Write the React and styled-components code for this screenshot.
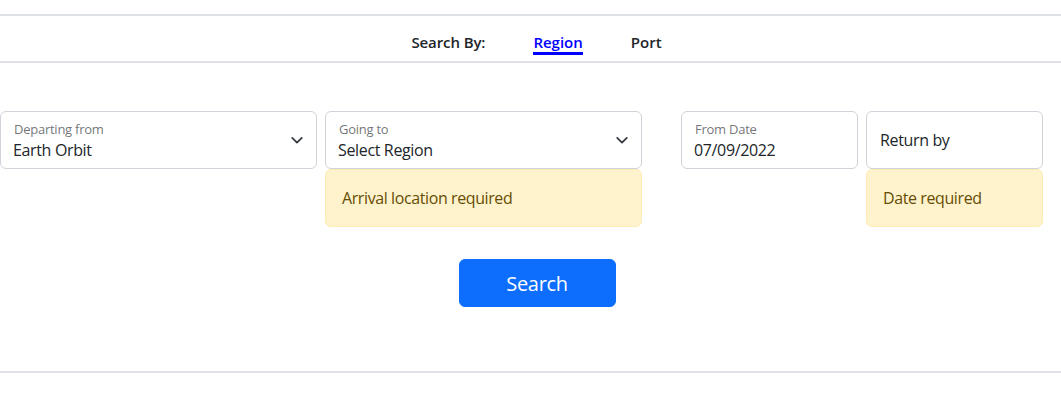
import React from "react";
import styled, { createGlobalStyle } from "styled-components";

const Global = createGlobalStyle`
  html, body { margin: 0; padding: 0; background: #fff; }
  body {
    font-family: "Segoe UI", "Open Sans", "Noto Sans", sans-serif;
    color: #212529;
    font-size: 16px;
  }
`;

const Page = styled.div`
  padding-top: 14px;
`;

const SearchByBar = styled.nav`
  border-top: 2px solid #dee2e6;
  border-bottom: 2px solid #dee2e6;
  height: 45px;
  box-sizing: content-box;
  display: flex;
  align-items: center;
  justify-content: center;
  padding-left: 12px;
  gap: 48px;
`;

const BarLabel = styled.span`
  font-weight: 600;
  font-size: 15px;
  color: #212529;
  padding-top: 6px;
  letter-spacing: -0.1px;
`;

const Tab = styled.a`
  font-weight: 600;
  font-size: 15px;
  text-decoration: none;
  color: ${(p) => (p.$active ? "#0000ff" : "#212529")};
  border-bottom: 3px solid ${(p) => (p.$active ? "#0000ff" : "transparent")};
  line-height: 20px;
  padding-top: 9px;
  cursor: pointer;
`;

const FormSection = styled.section`
  padding: 48px 0 64px;
  border-bottom: 2px solid #dee2e6;
`;

const FieldsRow = styled.div`
  display: flex;
  align-items: flex-start;
  gap: 39px;
`;

const Group = styled.div`
  display: flex;
  gap: 8px;
`;

const Column = styled.div`
  width: ${(p) => p.$w}px;
  display: flex;
  flex-direction: column;
`;

const Floating = styled.div`
  position: relative;
  height: 58px;
  box-sizing: border-box;
  border: 1px solid #ced4da;
  border-radius: 6px;
  background: #fff;
  padding: 0 12px;
  display: flex;
  flex-direction: column;
  justify-content: ${(p) => (p.$empty ? "center" : "flex-start")};
`;

const FloatLabel = styled.span`
  font-size: 13px;
  color: rgba(33, 37, 41, 0.65);
  line-height: 16px;
  margin-top: 9px;
  padding-left: 1px;
  letter-spacing: -0.25px;
`;

const FloatValue = styled.span`
  font-size: 16px;
  line-height: 22px;
  color: #212529;
  letter-spacing: -0.35px;
  margin-top: ${(p) => (p.$empty ? "0" : "2px")};
  padding-left: ${(p) => (p.$empty ? "1px" : "0")};
`;

const Chevron = styled.svg`
  position: absolute;
  right: 12px;
  top: 21px;
  width: 14px;
  height: 14px;
`;

const Alert = styled.div`
  height: 58px;
  box-sizing: border-box;
  background: #fff3cd;
  border: 1px solid #ffecb5;
  border-radius: 6px;
  color: #664d03;
  padding: 0 16px;
  display: flex;
  align-items: center;
  font-size: 16px;
  letter-spacing: -0.4px;
`;

const ButtonRow = styled.div`
  display: flex;
  justify-content: center;
  margin-top: 32px;
  padding-left: 13px;
`;

const SearchButton = styled.button`
  width: 157px;
  height: 48px;
  background: #0d6efd;
  border: 1px solid #0d6efd;
  border-radius: 6px;
  color: #fff;
  font-family: inherit;
  font-size: 20px;
  letter-spacing: -0.3px;
  cursor: pointer;
`;

const Arrow = () => (
  <Chevron viewBox="0 0 16 16">
    <path
      d="M2.5 5.5l5.5 5.5 5.5-5.5"
      fill="none"
      stroke="#343a40"
      strokeWidth="2"
      strokeLinecap="round"
      strokeLinejoin="round"
    />
  </Chevron>
);

export default function App() {
  return (
    <>
      <Global />
      <Page>
        <SearchByBar>
          <BarLabel>Search By:</BarLabel>
          <Tab $active>Region</Tab>
          <Tab>Port</Tab>
        </SearchByBar>
        <FormSection>
          <FieldsRow>
            <Group>
              <Column $w={317}>
                <Floating>
                  <FloatLabel>Departing from</FloatLabel>
                  <FloatValue>Earth Orbit</FloatValue>
                  <Arrow />
                </Floating>
              </Column>
              <Column $w={317}>
                <Floating>
                  <FloatLabel>Going to</FloatLabel>
                  <FloatValue>Select Region</FloatValue>
                  <Arrow />
                </Floating>
                <Alert>Arrival location required</Alert>
              </Column>
            </Group>
            <Group>
              <Column $w={177}>
                <Floating>
                  <FloatLabel>From Date</FloatLabel>
                  <FloatValue>07/09/2022</FloatValue>
                </Floating>
              </Column>
              <Column $w={177}>
                <Floating $empty>
                  <FloatValue $empty>Return by</FloatValue>
                </Floating>
                <Alert>Date required</Alert>
              </Column>
            </Group>
          </FieldsRow>
          <ButtonRow>
            <SearchButton>Search</SearchButton>
          </ButtonRow>
        </FormSection>
      </Page>
    </>
  );
}
